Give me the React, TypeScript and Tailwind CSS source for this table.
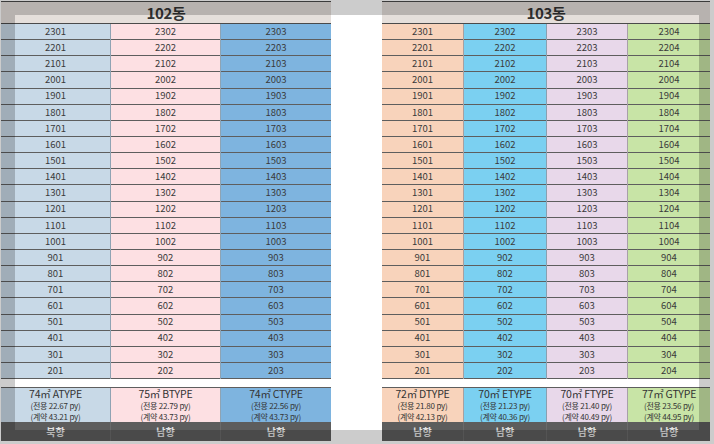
import React from "react";

type Col = {
  w: string;
  bg: string;
  sep: string;
  n: number;
  type: string;
  a: string;
  b: string;
  dir: string;
};

const floors = [23, 22, 21, 20, 19, 18, 17, 16, 15, 14, 13, 12, 11, 10, 9, 8, 7, 6, 5, 4, 3, 2];

const leftCols: Col[] = [
  { w: "w-[110px]", bg: "bg-[#c8d9e7]", sep: "border-r border-[#8fa3b3]", n: 1, type: "74㎡ ATYPE", a: "22.67", b: "43.21", dir: "북향" },
  { w: "w-[110px]", bg: "bg-[#fde0e3]", sep: "border-r border-[#8fa3b3]", n: 2, type: "75㎡ BTYPE", a: "22.79", b: "43.73", dir: "남향" },
  { w: "w-[110px]", bg: "bg-[#7eb4df]", sep: "", n: 3, type: "74㎡ CTYPE", a: "22.56", b: "43.73", dir: "남향" },
];

const rightCols: Col[] = [
  { w: "w-[82px]", bg: "bg-[#f8d3bb]", sep: "border-r border-[#a8a0a0]", n: 1, type: "72㎡ DTYPE", a: "21.80", b: "42.13", dir: "남향" },
  { w: "w-[83px]", bg: "bg-[#7bd0f1]", sep: "border-r border-[#8aa0b0]", n: 2, type: "70㎡ ETYPE", a: "21.23", b: "40.36", dir: "남향" },
  { w: "w-[81px]", bg: "bg-[#e8d8ea]", sep: "border-r border-[#a8a0a8]", n: 3, type: "70㎡ FTYPE", a: "21.40", b: "40.49", dir: "남향" },
  { w: "w-[82px]", bg: "bg-[#c8e4a6]", sep: "", n: 4, type: "77㎡ GTYPE", a: "23.56", b: "44.95", dir: "남향" },
];

function Table({ title, cols, width }: { title: string; cols: Col[]; width: string }) {
  return (
    <div className={`flex flex-col ${width}`}>
      <div className="h-[1px]" />
      <div className="h-[23px] border-t border-b border-[#4a4a4a] bg-[#e5dfdb] flex items-center justify-center">
        <span className="text-[15px] font-bold leading-none text-[#333] tracking-[-0.3px]">{title}</span>
      </div>
      <div className="flex h-[355px]">
        {cols.map((c) => (
          <div key={c.n} className={`flex flex-col ${c.w} ${c.bg} ${c.sep}`}>
            {floors.map((f) => (
              <div
                key={f}
                className="flex-1 border-b border-[#5e5e5e] flex items-center justify-center text-[9.5px] leading-none text-[#3a3a3a]"
              >
                {f * 100 + c.n}
              </div>
            ))}
          </div>
        ))}
      </div>
      <div className="h-[8px]" />
      <div className="flex h-[35px] border-t border-[#5e5e5e]">
        {cols.map((c) => (
          <div key={c.n} className={`flex flex-col items-center justify-center ${c.w} ${c.bg} ${c.sep} text-[#333]`}>
            <span className="text-[10.5px] leading-[12px] tracking-[-0.2px]">{c.type}</span>
            <span className="text-[8px] leading-[11px] tracking-[-0.2px]">(전용 {c.a} py)</span>
            <span className="text-[8px] leading-[11px] tracking-[-0.2px]">(계약 {c.b} py)</span>
          </div>
        ))}
      </div>
      <div className="flex h-[19px] bg-[#5d5d5d]">
        {cols.map((c) => (
          <div
            key={c.n}
            className={`flex items-center justify-center ${c.w} ${c.sep ? "border-r border-[#6a6a6a]" : ""} text-[10px] font-bold text-[#e2e2e2]`}
          >
            {c.dir}
          </div>
        ))}
      </div>
    </div>
  );
}

export default function App() {
  return (
    <div
      className="relative w-[714px] h-[444px] overflow-hidden bg-white flex"
      style={{ fontFamily: '"Noto Sans CJK KR", "Noto Sans", sans-serif' }}
    >
      <div className="ml-[1px]">
        <Table title="102동" cols={leftCols} width="w-[330px]" />
      </div>
      <div className="ml-[51px]">
        <Table title="103동" cols={rightCols} width="w-[328px]" />
      </div>
      <div className="pointer-events-none absolute left-[15px] top-[15px] w-[684px] h-[415px] shadow-[0_0_0_800px_rgba(0,0,0,0.2)]" />
    </div>
  );
}
